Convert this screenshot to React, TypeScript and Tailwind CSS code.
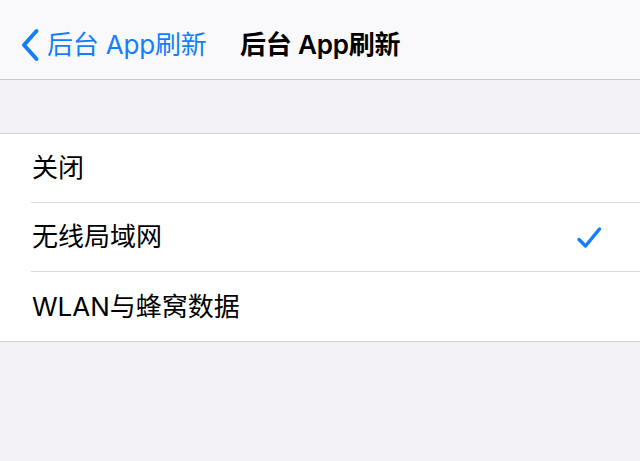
const font = { fontFamily: '"Inter", "Noto Sans CJK SC", sans-serif' };

const options = [
  { label: "关闭", checked: false },
  { label: "无线局域网", checked: true },
  { label: "WLAN与蜂窝数据", checked: false },
];

function Chevron() {
  return (
    <svg width="20" height="34" viewBox="0 0 20 34" fill="none">
      <path d="M16.5 3 L4 17 L16.5 31" stroke="#147efb" strokeWidth="4" strokeLinecap="round" strokeLinejoin="round" />
    </svg>
  );
}

function Check() {
  return (
    <svg width="26" height="23" viewBox="0 0 26 23" fill="none">
      <path d="M3 13.5 L9.5 20 L23.5 3" stroke="#147efb" strokeWidth="3.5" strokeLinecap="round" strokeLinejoin="round" />
    </svg>
  );
}

export default function App() {
  return (
    <div className="w-[640px] h-[461px] bg-[#f2f2f7] overflow-hidden" style={font}>
      <header className="h-[80px] bg-[#f9f9fb] border-b border-[#c9c9cd] flex items-center pt-[11px]">
        <div className="flex items-center pl-[20px] w-[238px]">
          <Chevron />
          <span className="ml-[7px] text-[26px] leading-none text-[#147efb] tracking-[-0.2px]">后台 App刷新</span>
        </div>
        <span className="ml-[2px] text-[26px] leading-none font-semibold text-black tracking-[-0.2px]">后台 App刷新</span>
      </header>

      <div className="h-[53px]" />

      <ul className="bg-white border-y border-[#d1d1d6]">
        {options.map((o, i) => (
          <li key={o.label} className="pl-[31px]">
            <div
              className={`h-[69px] flex items-center justify-between pl-px pr-[38px] ${
                i < options.length - 1 ? "border-b border-[#dcdce0]" : ""
              }`}
            >
              <span className="text-[26px] leading-none text-black">{o.label}</span>
              {o.checked && <Check />}
            </div>
          </li>
        ))}
      </ul>
    </div>
  );
}
